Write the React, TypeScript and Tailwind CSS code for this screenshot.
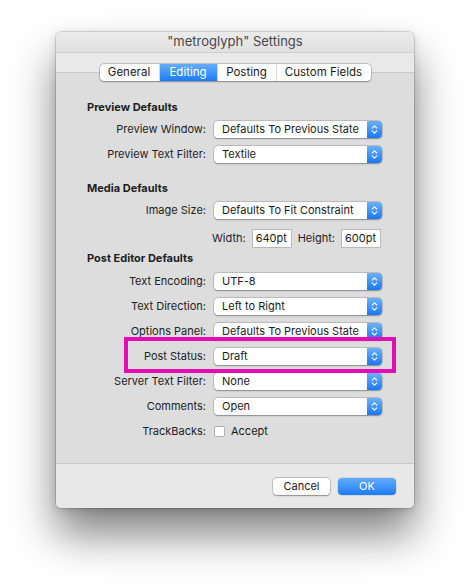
import React from 'react';

const font = { fontFamily: 'Inter, "Noto Sans", sans-serif' };

function Chevrons() {
  return (
    <svg width="7" height="11" viewBox="0 0 7 11">
      <path d="M1.2 4.2 L3.5 1.8 L5.8 4.2 M1.2 6.8 L3.5 9.2 L5.8 6.8" stroke="white" strokeWidth="1.1" fill="none" strokeLinecap="round" strokeLinejoin="round" />
    </svg>
  );
}

function Popup({ value }: { value: string }) {
  return (
    <div className="flex h-[17px] w-[168px] rounded-[4px] bg-white shadow-[0_0_0_0.5px_rgba(0,0,0,0.2),0_0.5px_1.5px_rgba(0,0,0,0.3)]">
      <span className="flex-1 pl-[8px] leading-[17px] text-[#1a1a1a]">{value}</span>
      <span className="flex w-[15px] items-center justify-center rounded-r-[4px] bg-gradient-to-b from-[#69b1fb] to-[#1877f4]">
        <Chevrons />
      </span>
    </div>
  );
}

function Row({ label, children }: { label: string; children: React.ReactNode }) {
  return (
    <div className="flex h-[25px] items-center gap-[8px]">
      <span className="w-[150px] text-right text-[#222]">{label}</span>
      {children}
    </div>
  );
}

function Section({ title, className = '' }: { title: string; className?: string }) {
  return <div className={`pl-[31px] font-bold text-[#1e1e1e] ${className}`}>{title}</div>;
}

const tabs = ['General', 'Editing', 'Posting', 'Custom Fields'];
const tabWidths = ['w-[59px]', 'w-[58px]', 'w-[59px]', 'w-[95px]'];

export default function App() {
  return (
    <div className="min-h-screen bg-white pl-[56px] pt-[32px] text-[11px]" style={font}>
      <div className="relative flex h-[476px] w-[358px] flex-col overflow-hidden rounded-[5px] bg-[#e9e9e9] shadow-[0_0_0_0.5px_rgba(0,0,0,0.25),0_26px_44px_rgba(0,0,0,0.5),0_2px_8px_rgba(0,0,0,0.15)]">
        {/* Title bar */}
        <div className="flex h-[21px] items-center justify-center border-b border-[#cfcfcf] bg-gradient-to-b from-[#ebebeb] to-[#e0e0e0] text-[13px] text-[#474747]">
          "metroglyph" Settings
        </div>

        {/* Tabs */}
        <div className="relative z-10 -mb-[9px] flex justify-center pt-[11px]">
          <div className="flex h-[17px] overflow-hidden rounded-[4px] bg-white text-[11.5px] shadow-[0_0_0_0.5px_rgba(0,0,0,0.25),0_0.5px_1.5px_rgba(0,0,0,0.3)]">
            {tabs.map((t, i) => (
              <div
                key={t}
                className={`flex ${tabWidths[i]} items-center justify-center ${i > 0 ? 'border-l border-[#d6d6d6]' : ''} ${
                  t === 'Editing' ? 'bg-gradient-to-b from-[#62adfb] to-[#1a7bf5] text-white' : 'text-[#1a1a1a]'
                }`}
              >
                {t}
              </div>
            ))}
          </div>
        </div>

        {/* Content */}
        <div className="flex-1 border-t border-[#c9c9c9] bg-[#dddddd] pt-[24px]">
          <Section title="Preview Defaults" className="h-[20px] leading-[20px]" />
          <Row label="Preview Window:"><Popup value="Defaults To Previous State" /></Row>
          <Row label="Preview Text Filter:"><Popup value="Textile" /></Row>

          <Section title="Media Defaults" className="mt-[11px] h-[20px] leading-[20px]" />
          <Row label="Image Size:"><Popup value="Defaults To Fit Constraint" /></Row>
          <div className="mt-[2px] flex h-[26px] items-center pl-[156px]">
            <span className="text-[#222]">Width:</span>
            <span className="ml-[6px] flex h-[19px] w-[40px] items-center border border-[#b9b9b9] bg-white pl-[3px] text-[#1a1a1a]">640pt</span>
            <span className="ml-[6px] text-[#222]">Height:</span>
            <span className="ml-[6px] flex h-[19px] w-[40px] items-center border border-[#b9b9b9] bg-white pl-[3px] text-[#1a1a1a]">600pt</span>
          </div>

          <Section title="Post Editor Defaults" className="h-[14px] leading-[14px]" />
          <div className="mt-[4px]">
            <Row label="Text Encoding:"><Popup value="UTF-8" /></Row>
            <Row label="Text Direction:"><Popup value="Left to Right" /></Row>
            <Row label="Options Panel:"><Popup value="Defaults To Previous State" /></Row>
            <Row label="Post Status:"><Popup value="Draft" /></Row>
            <Row label="Server Text Filter:"><Popup value="None" /></Row>
            <Row label="Comments:"><Popup value="Open" /></Row>
            <Row label="TrackBacks:">
              <span className="h-[11px] w-[11px] rounded-[2px] border border-[#b0b0b0] bg-white" />
              <span className="-ml-[2px] text-[#1a1a1a]">Accept</span>
            </Row>
          </div>
        </div>

        {/* Footer */}
        <div className="flex h-[45px] items-start justify-end gap-[8px] border-t border-[#c9c9c9] bg-[#e8e8e8] pr-[18px] pt-[14px]">
          <button className="h-[17px] w-[57px] rounded-[4px] bg-white text-[#1a1a1a] shadow-[0_0_0_0.5px_rgba(0,0,0,0.25),0_0.5px_1.5px_rgba(0,0,0,0.3)]">
            Cancel
          </button>
          <button className="h-[17px] w-[58px] rounded-[4px] bg-gradient-to-b from-[#62adfb] to-[#1a7bf5] text-white shadow-[0_0_0_0.5px_rgba(0,0,0,0.15)]">
            OK
          </button>
        </div>

        {/* Annotation highlight */}
        <div className="pointer-events-none absolute left-[68px] top-[305px] h-[36px] w-[272px] border-[4px] border-[#e20db3]" />
      </div>
    </div>
  );
}
